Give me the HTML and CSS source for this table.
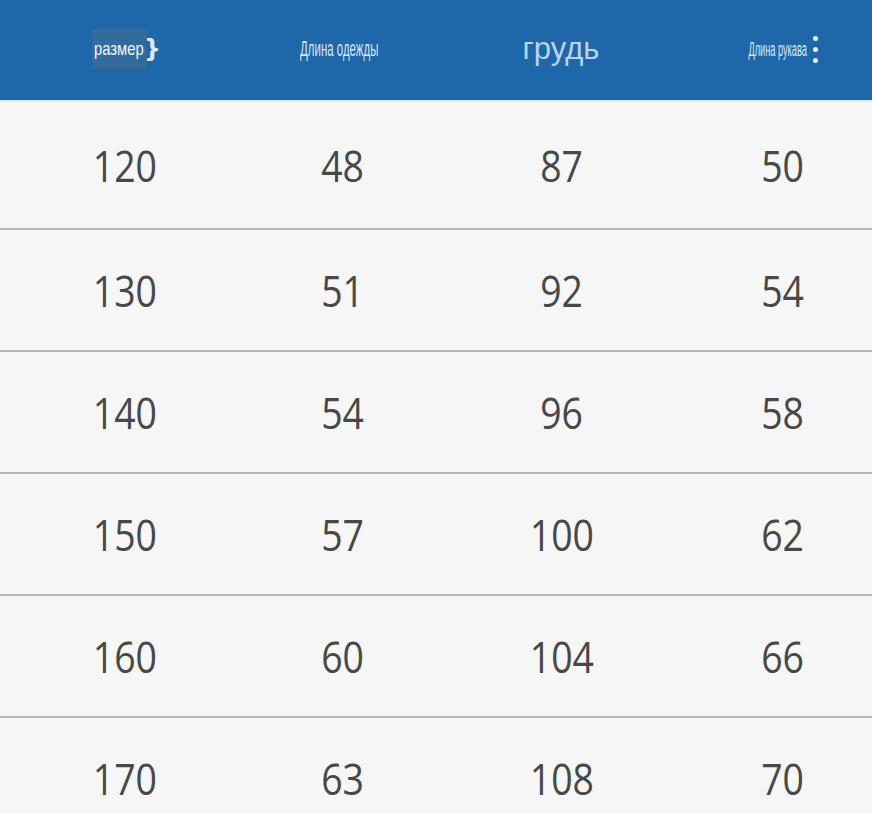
FILE: index.html
```html
<!DOCTYPE html>
<html lang="ru">
<head>
<meta charset="utf-8">
<title>Размеры</title>
<link rel="stylesheet" href="styles.css">
</head>
<body>
<div class="table">
  <div class="head">
    <div class="hcell"><span class="tag tag-size">размер</span><span class="brace">}</span></div>
    <div class="hcell"><span class="tag tag-len">Длина одежды</span></div>
    <div class="hcell"><span class="tag tag-chest">грудь</span></div>
    <div class="hcell"><span class="tag tag-sleeve">Длина рукава</span><span class="dots"><i></i><i></i><i></i></span></div>
  </div>
  <div class="row first"><span>120</span><span>48</span><span>87</span><span>50</span></div>
  <div class="row"><span>130</span><span>51</span><span>92</span><span>54</span></div>
  <div class="row"><span>140</span><span>54</span><span>96</span><span>58</span></div>
  <div class="row"><span>150</span><span>57</span><span>100</span><span>62</span></div>
  <div class="row"><span>160</span><span>60</span><span>104</span><span>66</span></div>
  <div class="row last"><span>170</span><span>63</span><span>108</span><span>70</span></div>
</div>
</body>
</html>
```
FILE: styles.css
```css
html, body {
  margin: 0;
  padding: 0;
  background: #f6f6f6;
  overflow: hidden;
}
.table {
  width: 872px;
  height: 813px;
  overflow: hidden;
}
.head {
  display: grid;
  grid-template-columns: 234px 218px 220px 222px;
  height: 100px;
  background: #1e67a8;
  border-bottom: 2px solid #d6eef6;
  align-items: center;
}
.hcell {
  display: flex;
  justify-content: center;
  align-items: center;
  padding-bottom: 2px;
}
.hcell:first-child {
  padding-left: 4px;
}
.tag {
  font-family: "Liberation Sans", Arial, sans-serif;
  display: inline-block;
  white-space: nowrap;
}
.tag-size {
  background: #346b9d;
  color: #f2f6ff;
  font-size: 19px;
  padding: 9px 4px 9px 2px;
  transform: scaleX(0.78);
  transform-origin: right center;
}
.brace {
  font-family: "DejaVu Sans", sans-serif;
  color: #dce8f8;
  font-size: 24px;
  font-weight: bold;
  margin-left: -3px;
}
.tag-len {
  color: #d7e6f8;
  font-size: 22px;
  transform: scaleX(0.52);
  margin: 0 -38px 0 -46px;
}
.tag-chest {
  color: #b9d3f1;
  font-size: 31px;
  margin-left: -2px;
}
.tag-sleeve {
  color: #dce8f8;
  font-size: 20px;
  transform: scaleX(0.46);
  transform-origin: right center;
  margin-left: -60px;
}
.dots {
  display: flex;
  flex-direction: column;
  gap: 6px;
  margin-left: 6px;
  margin-right: 8px;
}
.dots i {
  display: block;
  width: 5px;
  height: 5px;
  border-radius: 50%;
  background: #e6eefa;
}
.row {
  display: grid;
  grid-template-columns: 234px 218px 220px 222px;
  height: 120px;
  border-bottom: 2px solid #b6b6b6;
  align-items: center;
  justify-items: center;
  font-family: "Open Sans", "Noto Sans", sans-serif;
  font-size: 43px;
  color: #484848;
}
.row > span {
  display: inline-block;
  transform: scaleX(0.87);
}
.row > span:first-child {
  margin-left: 16px;
}
.row.first {
  height: 126px;
}
.row.last {
  border-bottom: none;
}
```
